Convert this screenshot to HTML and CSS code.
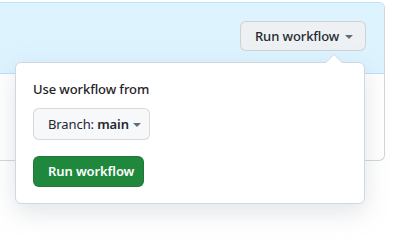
FILE: index.html
```html
<!DOCTYPE html>
<html>
<head>
<meta charset="utf-8">
<link rel="stylesheet" href="styles.css">
</head>
<body>
<div class="box">
  <div class="box-header">
    <button class="btn btn-header"><span>Run workflow</span><svg class="caret" viewBox="0 0 16 16" width="16" height="16"><path d="m4.427 7.427 3.396 3.396a.25.25 0 0 0 .354 0l3.396-3.396A.25.25 0 0 0 11.396 7H4.604a.25.25 0 0 0-.177.427Z"/></svg></button>
  </div>
  <div class="box-body"></div>
</div>
<div class="popup">
  <div class="label">Use workflow from</div>
  <button class="btn btn-branch"><span>Branch: <b>main</b></span><svg class="caret" viewBox="0 0 16 16" width="16" height="16"><path d="m4.427 7.427 3.396 3.396a.25.25 0 0 0 .354 0l3.396-3.396A.25.25 0 0 0 11.396 7H4.604a.25.25 0 0 0-.177.427Z"/></svg></button>
  <button class="btn btn-primary">Run workflow</button>
</div>
</body>
</html>
```
FILE: styles.css
```css
html, body {
  margin: 0;
  padding: 0;
  background: #ffffff;
  overflow: hidden;
}
body {
  width: 396px;
  height: 243px;
  position: relative;
  font-family: "Noto Sans", "Liberation Sans", sans-serif;
  font-size: 13px;
  letter-spacing: -0.1px;
  color: #1f2328;
}
.box {
  margin: 2px 0 0 -20px;
  width: 405px;
  box-sizing: border-box;
  border: 1px solid #d0d7de;
  border-top-color: #b6e3ff;
  border-radius: 6px;
  overflow: hidden;
}
.box-header {
  height: 71px;
  box-sizing: border-box;
  background: #ddf4ff;
  border-bottom: 1px solid #b6e3ff;
  display: flex;
  justify-content: flex-end;
  align-items: flex-start;
  padding: 18px 18px 0 0;
}
.box-body {
  height: 86px;
}
.btn {
  display: inline-flex;
  align-items: center;
  box-sizing: border-box;
  font-family: inherit;
  font-size: 13px;
  letter-spacing: -0.1px;
  line-height: 20px;
  border-radius: 6px;
  border: 1px solid rgba(31, 35, 40, 0.15);
  background: #f6f8fa;
  color: #24292f;
  cursor: pointer;
  white-space: nowrap;
}
.btn-header {
  width: 126px;
  height: 30px;
  padding: 0 8px 0 14px;
  background: #eef1f4;
  font-weight: 500;
}
.caret {
  fill: #636c76;
  margin-left: auto;
  flex: none;
}
.popup {
  position: absolute;
  left: 15px;
  top: 62px;
  width: 350px;
  height: 142px;
  box-sizing: border-box;
  background: #ffffff;
  border: 1px solid #d0d7de;
  border-radius: 6px;
  box-shadow: 0 8px 24px rgba(140, 149, 159, 0.25);
  padding: 16px 17px;
  display: flex;
  flex-direction: column;
  align-items: flex-start;
}
.popup::before {
  content: "";
  position: absolute;
  top: -18px;
  right: 21px;
  border: 9px solid transparent;
  border-bottom-color: #d0d7de;
}
.popup::after {
  content: "";
  position: absolute;
  top: -16px;
  right: 22px;
  border: 8px solid transparent;
  border-bottom-color: #ffffff;
}
.label {
  line-height: 20px;
  font-weight: 500;
  margin-bottom: 9px;
  color: #1f2328;
}
.btn-branch {
  width: 117px;
  height: 32px;
  padding: 0 9px 0 14px;
  font-weight: 400;
}
.btn-branch b {
  font-weight: 600;
}
.btn-primary {
  margin-top: 16px;
  width: 111px;
  height: 32px;
  padding: 0 0 0 14px;
  background: #1f883d;
  border-color: rgba(31, 35, 40, 0.15);
  color: #ffffff;
  font-weight: 600;
}
```
